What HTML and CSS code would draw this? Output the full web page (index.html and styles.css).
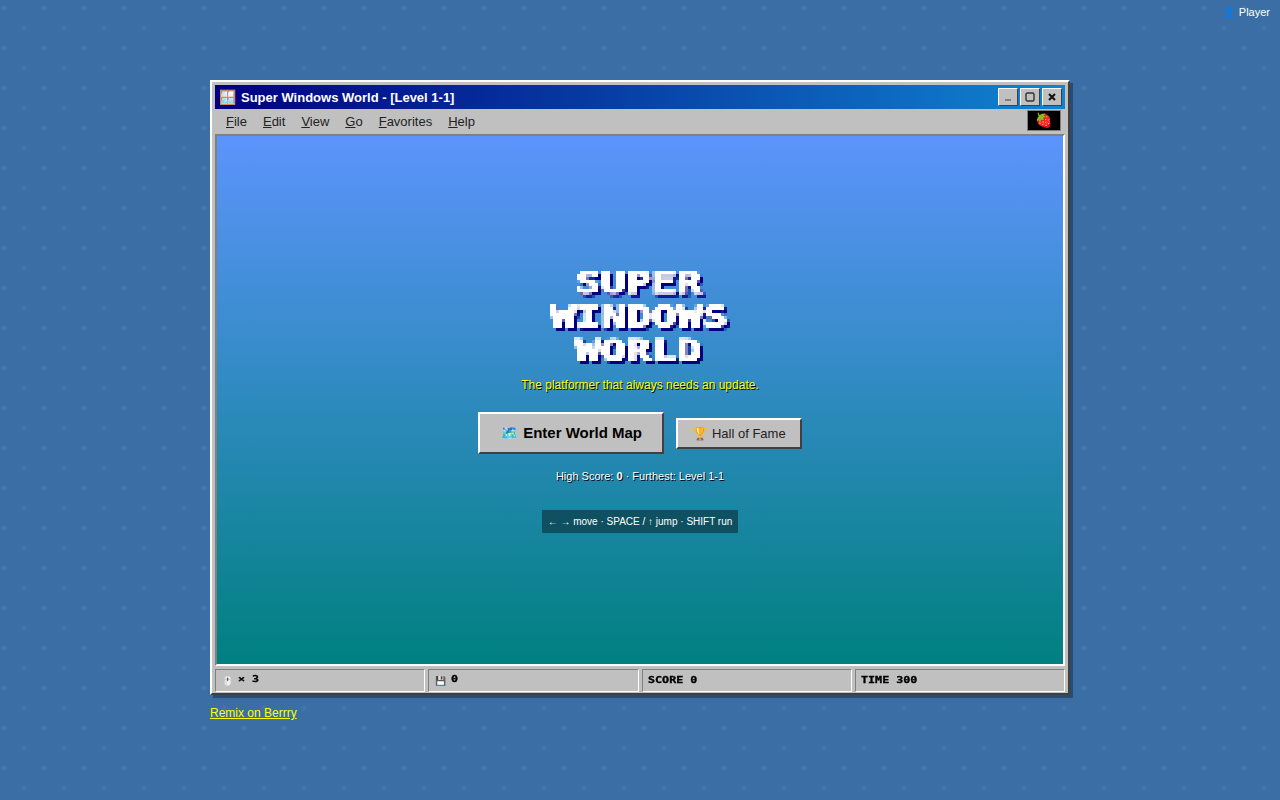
FILE: index.html
```html
<!DOCTYPE html>
<html lang="en">
<head>
<meta charset="utf-8">
<title>Super Windows World</title>
<link rel="stylesheet" href="styles.css">
</head>
<body>
<svg class="defs" width="0" height="0" aria-hidden="true">
  <filter id="pixelate" x="0" y="0" width="1" height="1" color-interpolation-filters="sRGB">
    <feFlood x="1" y="1" width="1" height="1"/>
    <feComposite width="3" height="3"/>
    <feTile result="grid"/>
    <feComposite in="SourceGraphic" in2="grid" operator="in"/>
    <feMorphology operator="dilate" radius="1"/>
  </filter>
</svg>
<div class="user"><span class="user-icon">👤</span> Player</div>
<main class="stage">
  <div class="window">
    <div class="titlebar">
      <span class="win-icon">🪟</span>
      <span class="title">Super Windows World - [Level 1-1]</span>
      <div class="controls">
        <button class="ctl"><span class="min"></span></button>
        <button class="ctl"><svg width="10" height="10" viewBox="0 0 10 10"><rect x="1" y="1" width="8" height="8" rx="1.5" fill="none" stroke="#333" stroke-width="1.4"/></svg></button>
        <button class="ctl"><svg width="8" height="8" viewBox="0 0 8 8"><path d="M1 1L7 7M7 1L1 7" stroke="#111" stroke-width="2" fill="none"/></svg></button>
      </div>
    </div>
    <div class="menubar">
      <span class="menu"><u>F</u>ile</span>
      <span class="menu"><u>E</u>dit</span>
      <span class="menu"><u>V</u>iew</span>
      <span class="menu"><u>G</u>o</span>
      <span class="menu"><u>F</u>avorites</span>
      <span class="menu"><u>H</u>elp</span>
      <div class="badge">🍓</div>
    </div>
    <div class="viewport">
      <h1 class="logo"><span>SUPER</span><span>WINDOWS</span><span>WORLD</span></h1>
      <p class="tagline">The platformer that always needs an update.</p>
      <div class="actions">
        <button class="btn btn-big">🗺️ Enter World Map</button>
        <button class="btn btn-small">🏆 Hall of Fame</button>
      </div>
      <p class="score">High Score: <b>0</b> · Furthest: Level 1-1</p>
      <p class="keys">← → move · SPACE / ↑ jump · SHIFT run</p>
    </div>
    <div class="statusbar">
      <div class="cell"><span class="emoji">🖱️</span><span class="px px-up">× 3</span></div>
      <div class="cell"><span class="emoji">💾</span><span class="px px-up">0</span></div>
      <div class="cell"><span class="px">SCORE 0</span></div>
      <div class="cell"><span class="px">TIME 300</span></div>
    </div>
  </div>
  <a class="remix" href="#">Remix on Berrry</a>
</main>
</body>
</html>
```
FILE: styles.css
```css
* { box-sizing: border-box; }
html, body { margin: 0; height: 100%; }
body {
  height: 800px;
  overflow: hidden;
  font-family: "Liberation Sans", Arial, sans-serif;
  background-color: #3a6ea5;
  background-image:
    radial-gradient(circle at 4px 8px, rgba(255,255,255,.07) 0, rgba(255,255,255,.07) 2px, transparent 3px),
    radial-gradient(circle at 24px 28px, rgba(255,255,255,.05) 0, rgba(255,255,255,.05) 2px, transparent 3px);
  background-size: 40px 40px;
}
.defs { display: block; height: 0; }
.user {
  position: absolute;
  top: 5px;
  right: 10px;
  font-size: 11px;
  line-height: 14px;
  color: #fff;
}
.stage {
  width: 860px;
  margin: 0 auto;
  padding-top: 80px;
}
.window {
  height: 615px;
  background: #c0c0c0;
  border: 2px solid;
  border-color: #fff #404040 #404040 #fff;
  padding: 3px;
  display: flex;
  flex-direction: column;
  box-shadow: 3px 3px 0 rgba(0,0,0,.3);
}
.titlebar {
  height: 24px;
  flex: none;
  display: flex;
  align-items: center;
  padding: 0 3px 0 4px;
  background: linear-gradient(90deg, #000080, #1084d0);
  color: #fff;
}
.win-icon { flex: none; width: 16px; font-size: 14px; line-height: 16px; text-align: center; }
.title { margin-left: 6px; font-size: 13px; font-weight: 700; }
.controls { margin-left: auto; display: flex; gap: 2px; }
.ctl {
  width: 20px;
  height: 18px;
  padding: 0;
  background: #c0c0c0;
  border: 1px solid;
  border-color: #fff #404040 #404040 #fff;
  display: flex;
  align-items: center;
  justify-content: center;
}
.min { width: 6px; height: 2px; background: #808080; margin-top: 6px; }
.menubar {
  height: 25px;
  flex: none;
  display: flex;
  align-items: center;
  padding-left: 3px;
  font-size: 13px;
  color: #222;
}
.menu { padding: 0 8px; }
.badge {
  margin: -2px 4px 0 auto;
  width: 34px;
  height: 21px;
  padding: 0 2px 1px 0;
  background: #000;
  border: 1px solid #808080;
  display: flex;
  align-items: center;
  justify-content: center;
  font-size: 14px;
}
.viewport {
  height: 532px;
  flex: none;
  border: 2px solid;
  border-color: #808080 #fff #fff #808080;
  background: linear-gradient(180deg, #5c94fc, #008080);
  display: flex;
  flex-direction: column;
  align-items: center;
  justify-content: center;
  text-align: center;
}
.logo {
  margin: 0;
  width: 300px;
  display: flex;
  flex-direction: column;
  align-items: center;
  font: 700 29px/34px "DejaVu Sans Mono", monospace;
  color: #fff;
  filter: url(#pixelate) drop-shadow(3px 3px 0 #000080);
}
.logo span {
  -webkit-text-stroke: 1.5px #fff;
  transform: translate(-1px, -3px) scale(1.45, 1.06);
}
.tagline {
  margin: 8px 0 0;
  font-size: 12px;
  line-height: 15px;
  color: #ff0;
  text-shadow: 1px 1px 0 #000;
}
.actions {
  display: flex;
  align-items: center;
  gap: 12px;
  margin-top: 19px;
}
.btn {
  background: #c0c0c0;
  border: 2px solid;
  border-color: #fff #404040 #404040 #fff;
  color: #000;
  font-family: "Liberation Sans", Arial, sans-serif;
  padding: 0;
}
.btn-big { width: 186px; height: 42px; font-size: 15px; font-weight: 700; }
.btn-small { width: 126px; height: 31px; margin-top: 1px; font-size: 13px; color: #222; }
.score {
  margin: 16px 0 0;
  font-size: 11px;
  line-height: 13px;
  color: #fff;
  text-shadow: 1px 1px 0 #000;
}
.keys {
  margin: 27px 0 0;
  height: 23px;
  padding: 0 6px;
  font-size: 10px;
  line-height: 23px;
  color: #fff;
  background: rgba(0,0,0,.4);
}
.statusbar {
  flex: none;
  margin-top: 3px;
  height: 23px;
  display: grid;
  grid-template-columns: repeat(4, 1fr);
  gap: 3px;
}
.cell {
  border: 1px solid;
  border-color: #808080 #fff #fff #808080;
  display: flex;
  align-items: center;
  padding: 0 5px;
  gap: 5px;
}
.emoji { font-size: 9px; margin-left: 1px; }
.px {
  font: 700 9px/12px "DejaVu Sans Mono", monospace;
  -webkit-text-stroke: .3px #000;
  color: #000;
  margin-top: -2px;
  transform: scaleX(1.3);
  transform-origin: left center;
}
.px-up { margin-top: -4px; }
.remix {
  display: block;
  width: max-content;
  margin-top: 11px;
  font-size: 12px;
  line-height: 15px;
  color: #ff0;
}
```
